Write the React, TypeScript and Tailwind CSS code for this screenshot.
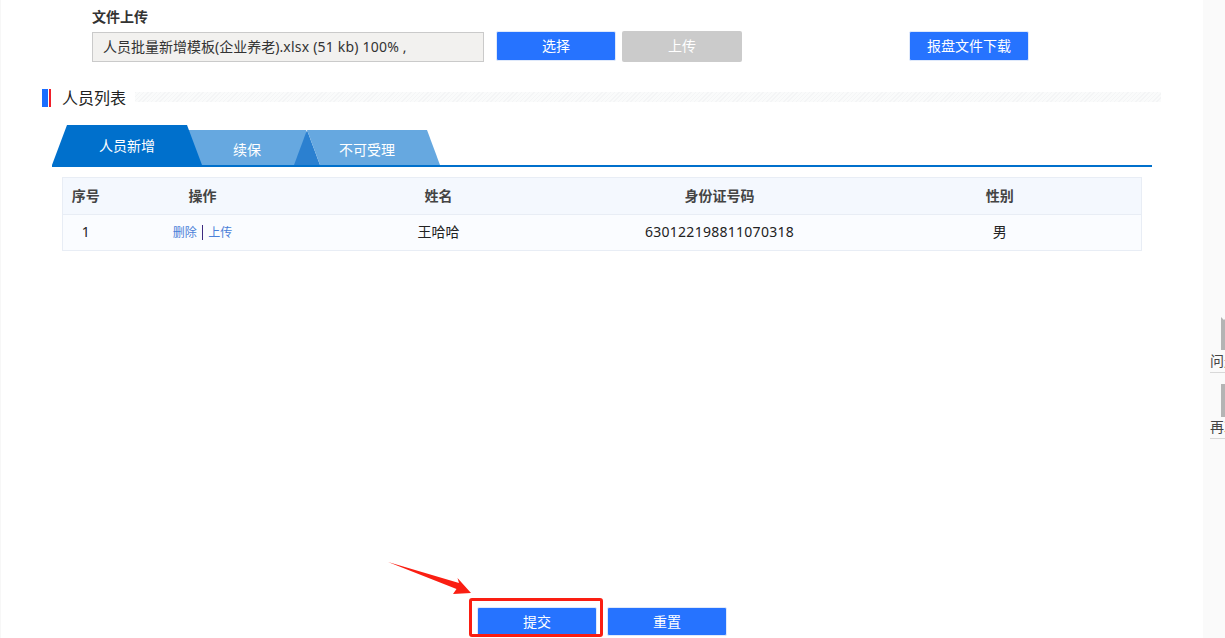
const cjk = "font-['Noto_Sans','Noto_Sans_CJK_SC',sans-serif]";

function Btn({ children, className = "" }: { children: React.ReactNode; className?: string }) {
  return (
    <button className={`flex items-center justify-center rounded-[2px] border border-[#dfe9fb] bg-[#2673ff] text-[14px] text-white ${className}`}>
      {children}
    </button>
  );
}

const cols = ["w-[46px]", "w-[188px]", "w-[284px]", "w-[278px]", "w-[283px]"];

export default function App() {
  return (
    <div className={`relative flex h-[638px] w-[1225px] overflow-hidden bg-white ${cjk}`}>
      <main className="w-[1203px] shrink-0 border-l border-[#f7f7f7]">
        <section className="ml-[91px] pt-[8px]">
          <h3 className="text-[14px] leading-[18px] font-bold text-[#333]">文件上传</h3>
          <div className="mt-[6px] flex items-start">
            <div className="flex h-[30px] w-[392px] items-center border border-[#cacaca] bg-[#f2f1ef] pb-[2px] pl-[10px] text-[14px] text-[#333]">
              <span>人员批量新增模板(企业养老)</span>
              <span className="tracking-[0.2px]">.xlsx (51 kb) 100% ,</span>
            </div>
            <Btn className="mt-[-1px] ml-[12px] h-[30px] w-[120px] pb-[2px]">选择</Btn>
            <button className="mt-[-1px] ml-[6px] h-[31px] w-[120px] rounded-[2px] bg-[#cbcbcb] pb-[2px] text-[14px] text-white">上传</button>
            <Btn className="mt-[-1px] ml-[167px] h-[30px] w-[120px] pb-[2px]">报盘文件下载</Btn>
          </div>
        </section>

        <section className="mt-[27px] ml-[41px] flex h-[18px] items-center">
          <span className="h-[18px] w-[6px] bg-[#1a6fff]" />
          <span className="ml-[1px] h-[18px] w-[2px] bg-[#f01f2a]" />
          <h2 className="ml-[11px] text-[16px] leading-[18px] text-[#222]">人员列表</h2>
          <div className="mb-[2px] ml-[9px] h-[10px] w-[1026px] bg-[repeating-linear-gradient(135deg,#f4f5f6_0,#f4f5f6_1px,#fafbfb_1px,#fafbfb_3px)]" />
        </section>

        <nav className="mt-[18px] ml-[51px] flex h-[42px] w-[1100px] items-start border-b-2 border-[#0070cc]">
          <div className="z-10 flex h-[40px] w-[150px] shrink-0 items-center justify-center bg-[#0070cc] text-[14px] text-white [clip-path:polygon(10%_0,90%_0,100%_100%,0_100%)]">
            人员新增
          </div>
          <div className="mt-[5px] ml-[-15px] flex h-[35px] w-[119px] shrink-0 items-center justify-center bg-[#66a8e0] pt-[4px] pl-[1px] text-[14px] text-white">
            续保
          </div>
          <div className="relative mt-[5px] ml-[-12px] flex h-[35px] w-[146px] shrink-0 items-center justify-center pt-[4px] text-[14px] text-white">
            <span className="absolute inset-0 bg-[#2b80d0] [clip-path:polygon(0_100%,13px_0,26px_100%)]" />
            <span className="absolute inset-0 bg-[#66a8e0] [clip-path:polygon(13px_0,133px_0,100%_100%,26px_100%)]" />
            <span className="relative">不可受理</span>
          </div>
        </nav>

        <table className="mt-[10px] ml-[61px] w-[1079px] table-fixed border-collapse text-center text-[14px]">
          <thead>
            <tr className="h-[37px] border border-[#e8edf5] bg-[#f4f8fe] font-bold text-[#444]">
              {["序号", "操作", "姓名", "身份证号码", "性别"].map((h, i) => (
                <th key={h} className={`${cols[i]} pb-[2px] font-bold`}>{h}</th>
              ))}
            </tr>
          </thead>
          <tbody>
            <tr className="h-[36px] border border-[#e8edf5] bg-[#fafcff] text-[#222]">
              <td className="pb-[2px]">1</td>
              <td className="text-[12px]">
                <span className="flex items-center justify-center">
                  <span className="text-[#4a80d8]">删除</span>
                  <span className="mx-[5px] h-[15px] w-[1.5px] bg-[#3d2a80]" />
                  <span className="text-[#4a80d8]">上传</span>
                </span>
              </td>
              <td className="pb-[2px]">王哈哈</td>
              <td className="pb-[2px] tracking-[0.27px]">630122198811070318</td>
              <td className="pb-[2px]">男</td>
            </tr>
          </tbody>
        </table>

        <div className="mt-[356px] ml-[476px] flex gap-[10px]">
          <Btn className="h-[29px] w-[120px]">提交</Btn>
          <Btn className="h-[29px] w-[120px]">重置</Btn>
        </div>
      </main>

      <aside className="w-[22px] shrink-0 overflow-hidden bg-[#fafafa] pt-[317px] pl-[7px]">
        <div className="w-[60px]">
          <div className="ml-[11px] h-[33px] w-[12px] bg-[#b4b4b4] [clip-path:polygon(0_0,3px_3px,6px_0,100%_0,100%_100%,0_100%)]" />
          <div className="mt-[1px] h-[20px] text-[14px] leading-[20px] text-[#444]">问题</div>
          <div className="border-b border-[#d8d8d8] pt-[1px]" />
          <div className="mt-[11px] ml-[11px] h-[33px] w-[12px] bg-[#b4b4b4]" />
          <div className="h-[20px] text-[14px] leading-[20px] text-[#444]">再次</div>
          <div className="border-b border-[#d8d8d8] pt-[1px]" />
        </div>
      </aside>

      <div className="absolute top-[598px] left-[469px] h-[39px] w-[134px] rounded-[3px] border-[3px] border-[#fa1e12]" />
      <svg className="absolute top-[555px] left-[380px]" width="100" height="45" viewBox="380 555 100 45">
        <polygon points="388,562 459,583 457.5,578 471,593 453,594 456.5,589" fill="#fa1e12" />
      </svg>
    </div>
  );
}
